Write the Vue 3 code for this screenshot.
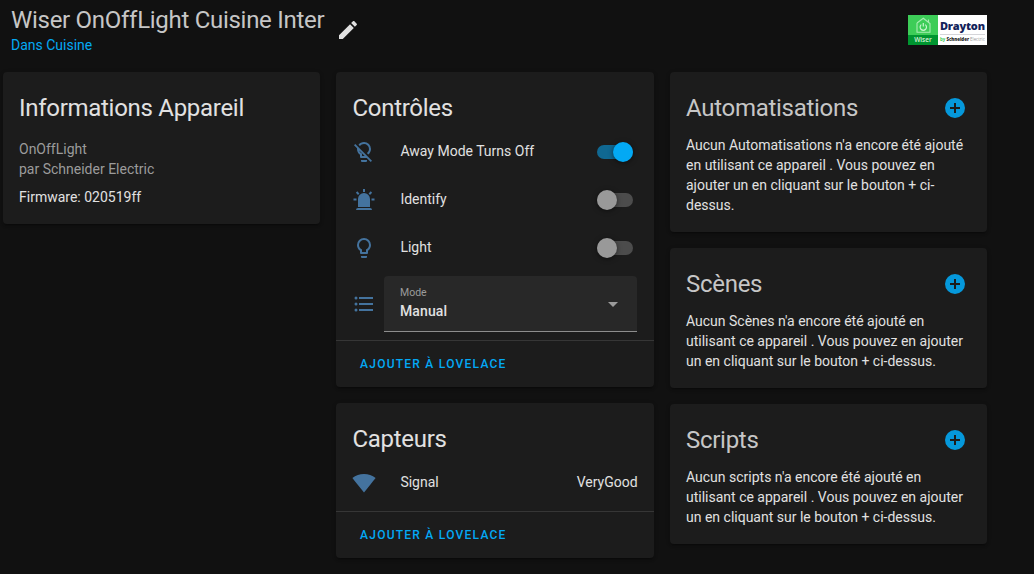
<script setup>
const icons = {
  pencil: 'M20.71,7.04C21.1,6.65 21.1,6 20.71,5.63L18.37,3.29C18,2.9 17.35,2.9 16.96,3.29L15.12,5.12L18.87,8.87M3,17.25V21H6.75L17.81,9.93L14.06,6.18L3,17.25Z',
  plus: 'M17,13H13V17H11V13H7V11H11V7H13V11H17M12,2A10,10 0 0,0 2,12A10,10 0 0,0 12,22A10,10 0 0,0 22,12A10,10 0 0,0 12,2Z',
  bulbOff: 'M12,2C9.76,2 7.78,3.05 6.5,4.68L7.93,6.11C8.84,4.84 10.32,4 12,4A5,5 0 0,1 17,9C17,10.68 16.16,12.16 14.89,13.06L16.31,14.5C17.94,13.21 19,11.24 19,9A7,7 0 0,0 12,2M3.28,4L2,5.27L5.04,8.3C5,8.53 5,8.76 5,9C5,11.38 6.19,13.47 8,14.74V17A1,1 0 0,0 9,18H14.73L18.73,22L20,20.72L3.28,4M7.23,10.5L12.73,16H10V13.58C8.68,13 7.66,11.88 7.23,10.5M9,20V21A1,1 0 0,0 10,22H14A1,1 0 0,0 15,21V20H9Z',
  alarm: 'M6,6.9L3.87,4.78L5.28,3.37L7.4,5.5L6,6.9M13,1V4H11V1H13M20.13,4.78L18,6.9L16.6,5.5L18.72,3.37L20.13,4.78M4.5,10.5V12.5H1.5V10.5H4.5M19.5,10.5H22.5V12.5H19.5V10.5M6,20H18A2,2 0 0,1 20,22H4A2,2 0 0,1 6,20M12,5A6,6 0 0,1 18,11V19H6V11A6,6 0 0,1 12,5Z',
  bulb: 'M12,2A7,7 0 0,1 19,9C19,11.38 17.81,13.47 16,14.74V17A1,1 0 0,1 15,18H9A1,1 0 0,1 8,17V14.74C6.19,13.47 5,11.38 5,9A7,7 0 0,1 12,2M9,21V20H15V21A1,1 0 0,1 14,22H10A1,1 0 0,1 9,21M12,4A5,5 0 0,0 7,9C7,11.05 8.23,12.81 10,13.58V16H14V13.58C15.77,12.81 17,11.05 17,9A5,5 0 0,0 12,4Z',
  list: 'M7,5H21V7H7V5M7,13V11H21V13H7M4,4.5A1.5,1.5 0 0,1 5.5,6A1.5,1.5 0 0,1 4,7.5A1.5,1.5 0 0,1 2.5,6A1.5,1.5 0 0,1 4,4.5M4,10.5A1.5,1.5 0 0,1 5.5,12A1.5,1.5 0 0,1 4,13.5A1.5,1.5 0 0,1 2.5,12A1.5,1.5 0 0,1 4,10.5M7,19V17H21V19H7M4,16.5A1.5,1.5 0 0,1 5.5,18A1.5,1.5 0 0,1 4,19.5A1.5,1.5 0 0,1 2.5,18A1.5,1.5 0 0,1 4,16.5Z',
  wifi: 'M12,3C7.79,3 3.7,4.41 0.38,7C4.41,12.06 7.89,16.37 12,21.5C16.08,16.42 20.24,11.24 23.65,7C20.32,4.41 16.22,3 12,3Z',
}
const controls = [
  { name: 'Away Mode Turns Off', icon: icons.bulbOff, on: true },
  { name: 'Identify', icon: icons.alarm, on: false },
  { name: 'Light', icon: icons.bulb, on: false },
]
const related = [
  { title: 'Automatisations', noun: 'Automatisations' },
  { title: 'Scènes', noun: 'Scènes' },
  { title: 'Scripts', noun: 'scripts' },
]
</script>

<template>
  <main class="page">
    <header class="top">
      <div>
        <h1>Wiser OnOffLight Cuisine Inter</h1>
        <a class="area">Dans Cuisine</a>
      </div>
      <svg class="icon edit" viewBox="0 0 24 24"><path :d="icons.pencil" /></svg>
      <div class="logo">
        <div class="wiser">
          <svg class="house" viewBox="0 0 30 20">
            <path d="M20.5 7.2V4.6M9 8v9.3h13V8.6L15.3 3.2L9 8" fill="none" stroke="#a9edb4" stroke-width="1.1" />
            <path d="M13.3 9.6a3.2 3.2 0 1 0 4 0M15.3 8v3.6" fill="none" stroke="#c9f5cf" stroke-width="1.2" />
          </svg>
          <span>Wiser</span>
        </div>
        <div class="brand">
          <b>Drayton</b>
          <small><i>by</i> <strong>Schneider</strong> <em>Electric</em></small>
        </div>
      </div>
    </header>

    <div class="columns">
      <div class="column">
        <section class="card info">
          <h2>Informations Appareil</h2>
          <div class="maker">
            <div>OnOffLight</div>
            <div>par Schneider Electric</div>
          </div>
          <div class="firmware">Firmware: 020519ff</div>
        </section>
      </div>

      <div class="column middle">
        <section class="card">
          <h2>Contrôles</h2>
          <div class="rows">
            <div v-for="c in controls" :key="c.name" class="row">
              <svg class="icon" viewBox="0 0 24 24"><path :d="c.icon" /></svg>
              <span class="name">{{ c.name }}</span>
              <span class="toggle" :class="{ on: c.on }"><span class="thumb"></span></span>
            </div>
            <div class="row select-row">
              <svg class="icon" viewBox="0 0 24 24"><path :d="icons.list" /></svg>
              <div class="select">
                <div>
                  <div class="label">Mode</div>
                  <div class="value">Manual</div>
                </div>
                <svg class="arrow" viewBox="0 0 10 5"><path d="M0 0H10L5 5Z" /></svg>
              </div>
            </div>
          </div>
          <div class="actions">Ajouter à Lovelace</div>
        </section>

        <section class="card">
          <h2>Capteurs</h2>
          <div class="rows">
            <div class="row">
              <svg class="icon" viewBox="0 0 24 24"><path :d="icons.wifi" /></svg>
              <span class="name">Signal</span>
              <span class="state">VeryGood</span>
            </div>
          </div>
          <div class="actions">Ajouter à Lovelace</div>
        </section>
      </div>

      <div class="column">
        <section v-for="r in related" :key="r.title" class="card related">
          <h2>{{ r.title }}<svg class="icon add" viewBox="0 0 24 24"><path :d="icons.plus" /></svg></h2>
          <p>Aucun {{ r.noun }} n'a encore été ajouté en utilisant ce appareil . Vous pouvez en ajouter un en cliquant sur le bouton + ci-dessus.</p>
        </section>
      </div>
    </div>
  </main>
</template>

<style>
body { background: #111; }
</style>

<style scoped>
.page {
  box-sizing: border-box;
  width: 1034px;
  height: 574px;
  overflow: hidden;
  background: #111111;
  color: #e1e1e1;
  font: 14px/20px Roboto, "Noto Sans", sans-serif;
}
.top {
  box-sizing: border-box;
  display: flex;
  height: 72px;
  padding: 4px 47px 0 11px;
}
h1, h2 {
  margin: 0;
  font-size: 24px;
  font-weight: 400;
  letter-spacing: -0.012em;
}
h1 { line-height: 32px; color: #c6c6c6; white-space: nowrap; width: 325px; }
.area { display: block; margin-top: -1px; color: #03a9f4; }
.icon { flex: none; display: block; width: 24px; height: 24px; fill: #44739e; }
.edit { margin-top: 14px; fill: #e1e1e1; }
.logo {
  display: flex;
  width: 79px;
  height: 30px;
  margin: 11px 0 0 auto;
  background: #fff;
}
.wiser { width: 30px; background: #3dcd58; color: #d5f2da; }
.house { display: block; width: 30px; height: 20px; }
.wiser span {
  display: block;
  height: 10px;
  background: #009530;
  font: 600 6.5px/10px "Open Sans", sans-serif;
  text-align: center;
}
.brand { flex: 1; min-width: 0; color: #13235b; white-space: nowrap; }
.brand b {
  display: block;
  height: 19px;
  margin: 0 2px;
  border-bottom: 1px solid #d5d5d9;
  font: 800 11px/22px "Open Sans", sans-serif;
  letter-spacing: -0.2px;
}
.brand small { display: block; padding-left: 2px; font: 4.4px/9px "Open Sans", sans-serif; }
.brand i { color: #3dcd58; font-style: normal; font-weight: 700; }
.brand strong { color: #222; font-weight: 800; }
.brand em { color: #999; font-style: normal; }

.columns {
  display: grid;
  grid-template-columns: 317px 318px 317px;
  gap: 16px;
  padding-left: 3px;
}
.column { display: flex; flex-direction: column; gap: 16px; }
.card {
  box-sizing: border-box;
  padding-top: 12px;
  border-radius: 4px;
  background: #1c1c1c;
  box-shadow: 0 2px 2px rgba(0, 0, 0, .14), 0 1px 5px rgba(0, 0, 0, .12), 0 3px 1px -2px rgba(0, 0, 0, .2);
}
h2 {
  display: flex;
  align-items: center;
  padding: 0 16px;
  line-height: 48px;
}
.info { height: 152px; }
.maker { padding: 7px 16px 0; color: #9b9b9b; }
.firmware { padding: 8px 16px 0; }
.rows { display: flex; flex-direction: column; gap: 8px; padding: 0 17px 8px 16px; }
.middle h2 { padding-left: 16.5px; }
.row { display: flex; align-items: center; height: 40px; }
.name { flex: 1; padding: 0 0 2px 24.4px; }
.state { padding-bottom: 2px; margin-right: -0.6px; }
.toggle {
  position: relative;
  width: 36px;
  height: 14px;
  margin-right: 4px;
  border-radius: 7px;
  background: #4c4c4c;
}
.thumb {
  position: absolute;
  top: -3px;
  left: 0;
  width: 20px;
  height: 20px;
  border-radius: 50%;
  background: #999;
  box-shadow: 0 1px 5px rgba(0, 0, 0, .5);
}
.toggle.on { background: #106892; }
.toggle.on .thumb { left: 16px; background: #03a9f4; }
.select-row { height: 56px; }
.select {
  box-sizing: border-box;
  flex: 1;
  display: flex;
  align-items: center;
  justify-content: space-between;
  height: 56px;
  margin-left: 8px;
  padding: 0 19px 0 16px;
  border-bottom: 1px solid #8d8d8d;
  border-radius: 4px 4px 0 0;
  background: #282828;
}
.label { padding-top: 1px; font-size: 10.5px; line-height: 14px; color: #9b9b9b; }
.value { padding: 1px 0 2px; font-weight: 500; letter-spacing: .1px; }
.arrow { width: 10px; height: 5px; margin-top: 2px; fill: #9b9b9b; }
.actions {
  box-sizing: border-box;
  height: 47px;
  padding-left: 24px;
  border-top: 1px solid #363636;
  color: #03a9f4;
  font-size: 12px;
  font-weight: 500;
  line-height: 46px;
  letter-spacing: 1.25px;
  text-transform: uppercase;
}
.related h2 { justify-content: space-between; padding-right: 20px; color: #c6c6c6; }
.add { fill: #0598db; }
.related p { margin: 0; padding: 3px 16px 17px; }
</style>
